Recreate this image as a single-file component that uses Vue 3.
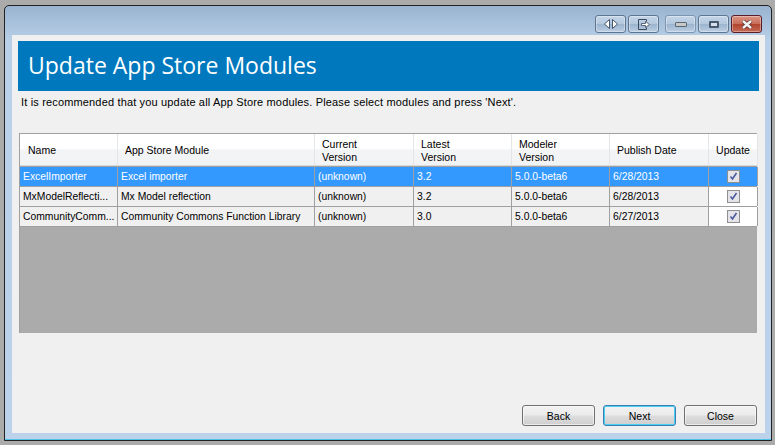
<template>
  <div class="screen">
    <div class="window">
      <div class="titlebar">
        <button class="cap">
          <svg width="14" height="10" viewBox="0 0 14 10"><path d="M5.500.5v9l-5-4.500zM8.500.5v9l5-4.500z" fill="#fff" stroke="#46566a" stroke-width="1"/></svg>
        </button>
        <button class="cap">
          <svg width="14" height="11" viewBox="0 0 14 11"><path d="M9.500 2.500v-2h-8v10h8v-2" fill="none" stroke="#3c4a5c"/><path d="M4.500 4.500h4v-2l4 3-4 3v-2h-4z" fill="#fff" stroke="#3c4a5c" stroke-width=".8"/></svg>
        </button>
        <button class="cap min">
          <span class="minbar"></span>
        </button>
        <button class="cap">
          <span class="maxbox"></span>
        </button>
        <button class="cap close">
          <svg width="12" height="9" viewBox="0 0 12 9"><path d="M2 1l8 7M10 1L2 8" stroke="#4a2420" stroke-width="3.800"/><path d="M2 1l8 7M10 1L2 8" stroke="#f4f4f4" stroke-width="2.500"/></svg>
        </button>
      </div>
      <div class="client">
        <div class="banner">Update App Store Modules</div>
        <p class="hint">It is recommended that you update all App Store modules. Please select modules and press 'Next'.</p>
        <div class="grid">
          <div class="head">
            <div v-for="col in columns" :key="col.label" class="hcell" :class="{ center: col.key === 'update' }" :style="{ width: col.width + 'px' }">{{ col.label }}</div>
          </div>
          <div v-for="(row, i) in rows" :key="row.name" class="row" :class="{ selected: i === 0 }">
            <div v-for="col in columns" :key="col.key" class="cell" :class="{ check: col.key === 'update' }" :style="{ width: col.width + 'px' }">
              <span v-if="col.key === 'update'" class="box">
                <svg width="9" height="9" viewBox="0 0 9 9"><path d="M1.500 4.500l2 2.500 4-6" fill="none" stroke="#4a5a9c" stroke-width="1.600"/></svg>
              </span>
              <template v-else>{{ row[col.key] }}</template>
            </div>
          </div>
        </div>
        <div class="actions">
          <button class="btn">Back</button>
          <button class="btn default">Next</button>
          <button class="btn">Close</button>
        </div>
      </div>
    </div>
  </div>
</template>

<script setup>
const columns = [
  { key: "name", label: "Name", width: 98 },
  { key: "module", label: "App Store Module", width: 197 },
  { key: "current", label: "Current\nVersion", width: 99 },
  { key: "latest", label: "Latest\nVersion", width: 98 },
  { key: "modeler", label: "Modeler\nVersion", width: 98 },
  { key: "date", label: "Publish Date", width: 99 },
  { key: "update", label: "Update", width: 49 },
];

const rows = [
  { name: "ExcelImporter", module: "Excel importer", current: "(unknown)", latest: "3.2", modeler: "5.0.0-beta6", date: "6/28/2013" },
  { name: "MxModelReflecti...", module: "Mx Model reflection", current: "(unknown)", latest: "3.2", modeler: "5.0.0-beta6", date: "6/28/2013" },
  { name: "CommunityComm...", module: "Community Commons Function Library", current: "(unknown)", latest: "3.0", modeler: "5.0.0-beta6", date: "6/27/2013" },
];
</script>

<style>
html,
body {
  margin: 0;
  background: #ababab;
}
</style>

<style scoped>
.screen {
  width: 775px;
  height: 445px;
  padding: 5px 3px 4px 4px;
  box-sizing: border-box;
  font-family: "Liberation Sans", Arial, sans-serif;
  font-size: 10.5px;
  color: #000;
  overflow: hidden;
}
.window {
  height: 100%;
  box-sizing: border-box;
  border: 1px solid #222;
  border-radius: 5px 5px 0 0;
  padding: 0 6px 7px 7px;
  background: linear-gradient(180deg, #99b3d0 0, #b9d0e8 36px, #bcd2ea 100%);
  box-shadow: inset 0 -1px 0 #4fc3e6;
  display: flex;
  flex-direction: column;
}
.titlebar {
  height: 29px;
  flex: none;
  display: flex;
  align-items: flex-start;
  justify-content: flex-end;
  gap: 2px;
  padding: 9px 3px 0 0;
  box-sizing: border-box;
}
.cap {
  width: 31px;
  height: 18px;
  padding: 0;
  display: flex;
  align-items: center;
  justify-content: center;
  box-sizing: border-box;
  border: 1px solid #5f7590;
  border-radius: 3px;
  background: linear-gradient(180deg, #c4d5e8 0, #b4c8de 48%, #9cb4ce 52%, #bccfe4 100%);
  box-shadow: inset 0 0 0 1px rgba(255, 255, 255, 0.35);
}
.min {
  margin-left: 4px;
  border-color: #7e95b0;
}
.minbar {
  width: 10px;
  height: 3px;
  background: #c8c8c8;
  border: 1px solid #5b6673;
  border-radius: 1px;
}
.maxbox {
  width: 6px;
  height: 3px;
  background: #d4e0ee;
  border: 2px solid #4a586c;
  border-radius: 1px;
}
.close {
  border-color: #5a1c28;
  background: linear-gradient(180deg, #dc9484 0, #c86e5a 48%, #b0442f 52%, #c66a56 100%);
}
.client {
  flex: 1;
  background: #f0f0f0;
  padding: 6px 6px 0 6px;
  display: flex;
  flex-direction: column;
  min-height: 0;
}
.banner {
  height: 50px;
  background: #0078be;
  color: #fff;
  font-family: "Open Sans", sans-serif;
  font-size: 23px;
  line-height: 49px;
  padding-left: 10px;
  flex: none;
}
.hint {
  margin: 5px 0 0 3px;
  line-height: 13px;
  height: 13px;
  white-space: nowrap;
  font-size: 11px;
  letter-spacing: 0.16px;
}
.grid {
  margin: 24px 0 0 1px;
  height: 200px;
  width: 738px;
  box-sizing: border-box;
  background: #ababab;
  border-top: 1px solid #a0a0a0;
  border-left: 1px solid #a0a0a0;
  flex: none;
}
.head {
  display: flex;
  height: 32px;
  background: linear-gradient(180deg, #fff 0, #fff 45%, #f3f4f6 50%, #f2f3f5 100%);
  border-bottom: 1px solid #a0a0a0;
}
.hcell {
  box-sizing: border-box;
  flex: none;
  height: 100%;
  white-space: pre-line;
  display: flex;
  align-items: center;
  padding-left: 7px;
  padding-top: 2px;
  line-height: 13px;
  border-right: 1px solid #e4e5e7;
  border-bottom: 1px solid #d8d8d8;
}
.hcell:first-child {
  padding-left: 8px;
}
.hcell.center {
  justify-content: center;
  padding-left: 0;
}
.row {
  display: flex;
  height: 20px;
  background: #f0f0f0;
  border-bottom: 1px solid #a0a0a0;
  box-sizing: border-box;
}
.row.selected {
  background: #3399ff;
  color: #fff;
}
.cell {
  box-sizing: border-box;
  flex: none;
  height: 100%;
  padding-left: 3px;
  line-height: 19px;
  font-size: 10.35px;
  white-space: nowrap;
  overflow: hidden;
  border-right: 1px solid #a0a0a0;
}
.cell.check {
  background: #fff;
  padding: 0;
  display: flex;
  align-items: center;
  justify-content: center;
}
.selected .cell.check {
  background: #3399ff;
}
.box {
  width: 11px;
  height: 11px;
  box-sizing: content-box;
  background: #e4e4ea;
  border: 1px solid #8e8f8f;
  display: flex;
  align-items: center;
  justify-content: center;
}
.actions {
  margin-top: auto;
  padding: 0 2px 7px 0;
  display: flex;
  justify-content: flex-end;
  gap: 8px;
}
.btn {
  width: 73px;
  height: 21px;
  padding: 0;
  box-sizing: border-box;
  font: inherit;
  color: #000;
  border: 1px solid #707070;
  border-radius: 3px;
  background: linear-gradient(180deg, #f2f2f2 0, #ebebeb 48%, #dddddd 52%, #cfcfcf 100%);
  box-shadow: inset 0 0 0 1px rgba(255, 255, 255, 0.6);
}
.btn.default {
  border-color: #3c7fb1;
  box-shadow: inset 0 0 0 1px #48d0f4;
}
</style>
